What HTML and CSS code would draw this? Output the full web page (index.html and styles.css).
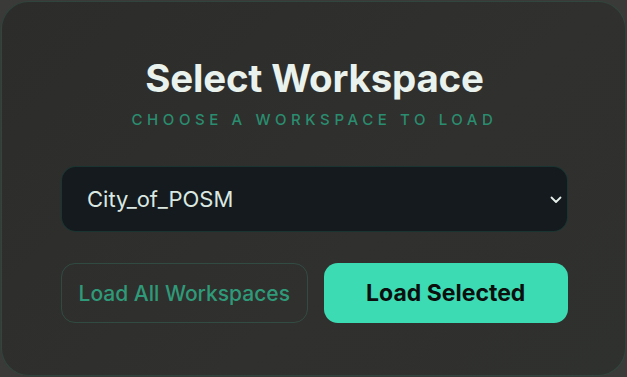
FILE: index.html
```html
<!DOCTYPE html>
<html lang="en">

<head>
	<meta charset="UTF-8">
	<meta name="viewport" content="width=device-width, initial-scale=1.0">
	<title>Select Workspace</title>
	<link rel="stylesheet" href="styles.css">
</head>

<body>
	<div class="card">
		<h1>Select Workspace</h1>
		<p class="subtitle">Choose a workspace to load</p>

		<div class="select-wrap">
			<select class="workspace-select">
				<option>City_of_POSM</option>
			</select>
			<svg class="chevron" width="12" height="8" viewBox="0 0 12 8">
				<path d="M1.5 1.5 L6 6 L10.5 1.5" fill="none" stroke="#e6efea" stroke-width="1.8" stroke-linecap="round" stroke-linejoin="round" />
			</svg>
		</div>

		<div class="actions">
			<button class="btn btn-outline">Load All Workspaces</button>
			<button class="btn btn-primary">Load Selected</button>
		</div>
	</div>
</body>

</html>
```

FILE: styles.css
```css
html,
body {
	height: 100%;
}

body {
	font-family: Inter, 'Noto Sans', sans-serif;
	background-color: #3a3a38;
	margin: 0;
	padding: 1px;
	box-sizing: border-box;
}

.card {
	height: 100%;
	box-sizing: border-box;
	padding: 53px 57px 0 59px;
	background: linear-gradient(135deg, #2c2d2b 0%, #30302e 60%, #2f312e 100%);
	border: 1px solid rgba(61, 219, 180, 0.12);
	border-radius: 28px;
	text-align: center;
}

h1 {
	margin: 0;
	color: #e9f2ec;
	font-size: 38.5px;
	font-weight: 700;
	line-height: 46px;
	letter-spacing: -0.2px;
}

.subtitle {
	margin: 10px 0 0;
	color: #2a8d6f;
	font-size: 15px;
	font-weight: 500;
	line-height: 18px;
	letter-spacing: 4.6px;
	text-transform: uppercase;
}

.select-wrap {
	position: relative;
	margin-top: 37px;
}

.workspace-select {
	display: block;
	width: 100%;
	height: 66px;
	padding: 0 25px;
	appearance: none;
	background-color: #141a1d;
	color: #dbe8e1;
	border: 1px solid rgba(61, 219, 180, 0.14);
	border-radius: 15px;
	font-family: Inter, 'Noto Sans', sans-serif;
	font-size: 22px;
	outline: none;
}

.chevron {
	position: absolute;
	right: 6px;
	top: 30px;
}

.actions {
	display: flex;
	gap: 16px;
	margin-top: 31px;
}

.btn {
	flex: 1;
	height: 60px;
	border-radius: 14px;
	font-family: Inter, 'Noto Sans', sans-serif;
	font-size: 21px;
	cursor: pointer;
}

.btn-outline {
	background: transparent;
	border: 1px solid rgba(61, 219, 180, 0.16);
	color: #2f9a79;
	font-weight: 500;
}

.btn-primary {
	background-color: #3ddbb4;
	border: none;
	color: #0c0f0e;
	font-weight: 700;
	font-size: 23px;
}
```
